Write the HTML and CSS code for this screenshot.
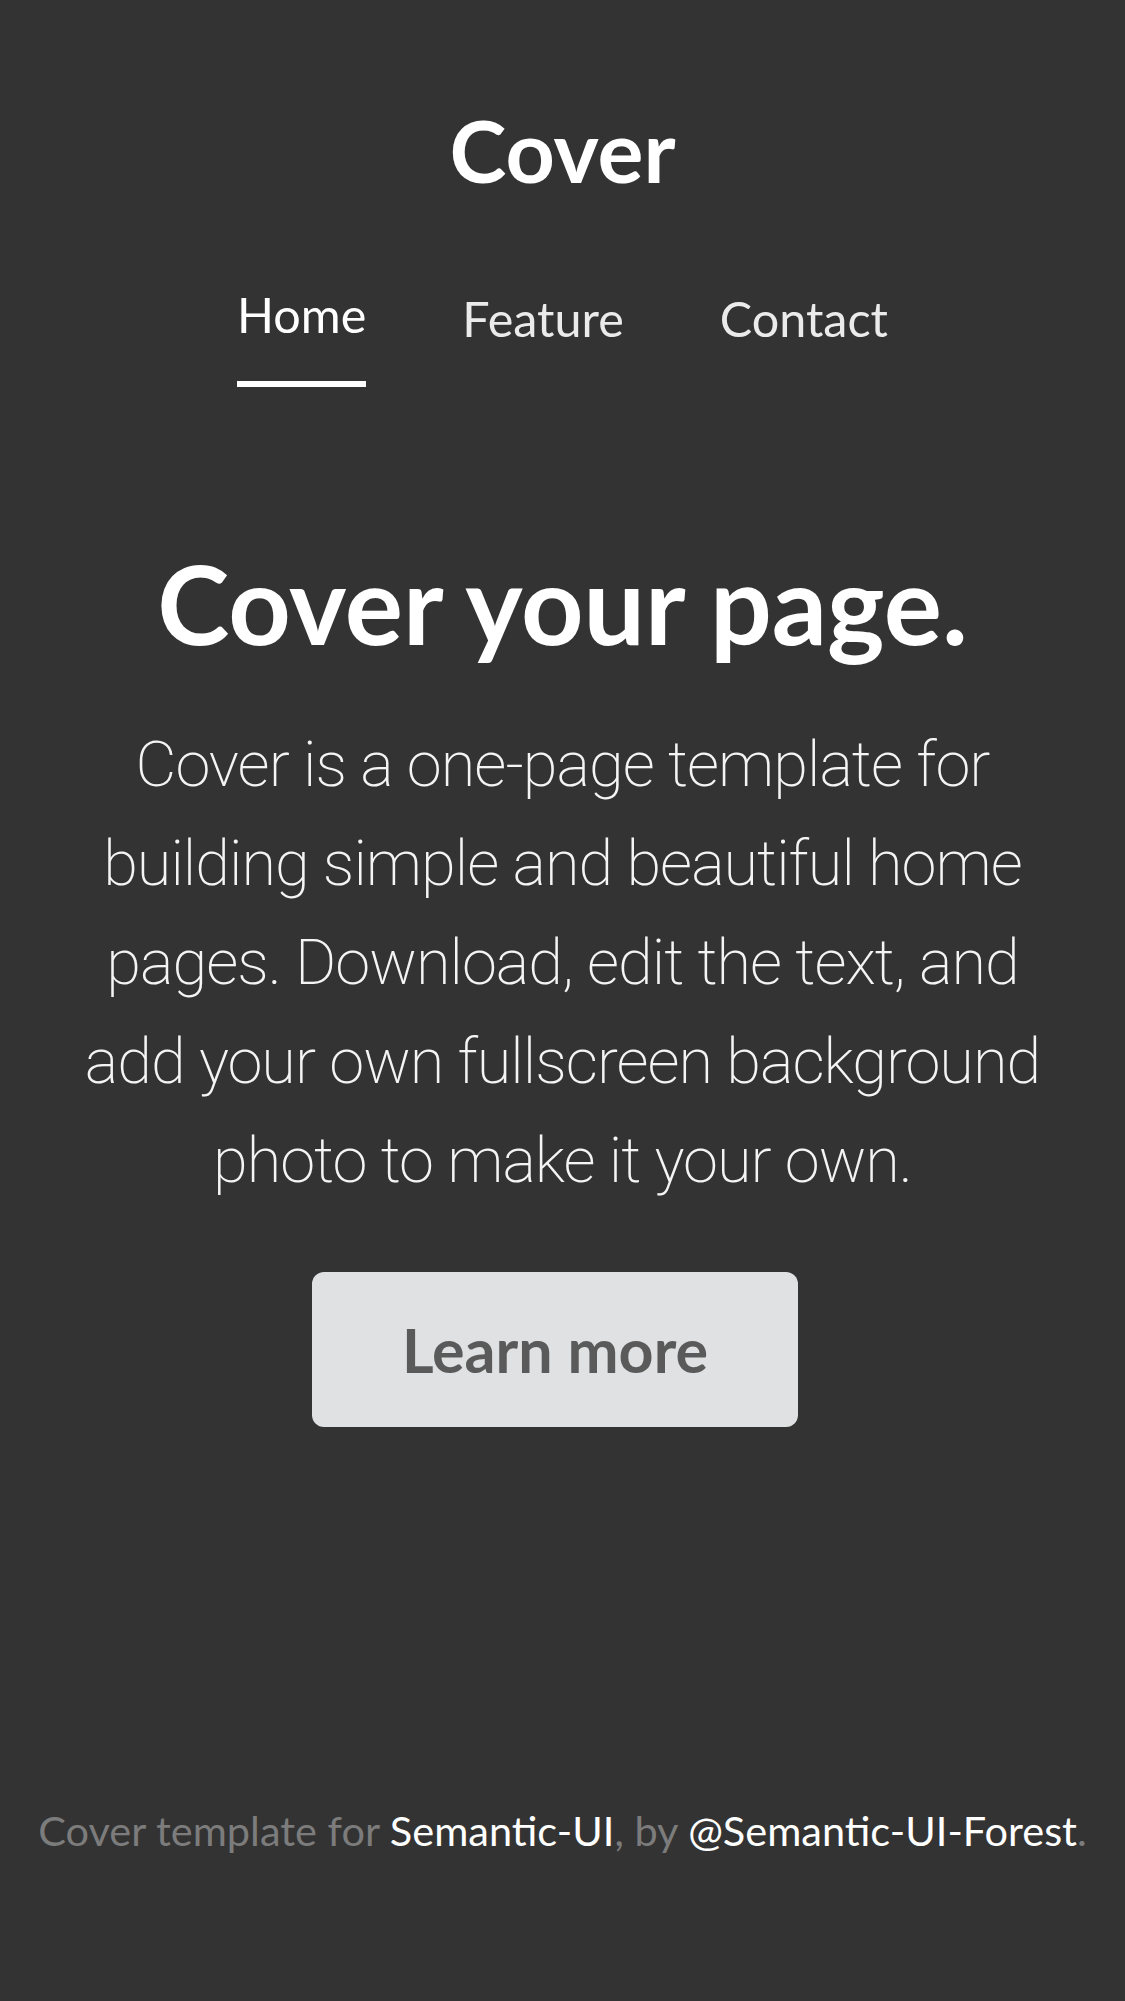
FILE: index.html
```html
<!DOCTYPE html>
<html lang="en">
<head>
<meta charset="utf-8">
<title>Cover</title>
<link rel="stylesheet" href="styles.css">
</head>
<body>
<div class="page">
  <header class="masthead">
    <h3 class="brand">Cover</h3>
    <nav class="nav">
      <a class="nav-item active" href="#">Home</a>
      <a class="nav-item" href="#">Feature</a>
      <a class="nav-item" href="#">Contact</a>
    </nav>
  </header>
  <main class="hero">
    <h1 class="hero-title">Cover your page.</h1>
    <p class="hero-lead">Cover is a one-page template for<br>building simple and beautiful home<br>pages. Download, edit the text, and<br>add your own fullscreen background<br>photo to make it your own.</p>
    <a class="btn" href="#">Learn more</a>
  </main>
  <footer class="footer">
    <p>Cover template for <a href="#">Semantic-UI</a>, by <a href="#">@Semantic-UI-Forest</a>.</p>
  </footer>
</div>
</body>
</html>
```
FILE: styles.css
```css
html, body {
  margin: 0;
  padding: 0;
  background: #333333;
}
body {
  font-family: "Lato", "Helvetica Neue", Arial, sans-serif;
  color: #ffffff;
}
.page {
  min-height: 100vh;
  display: flex;
  flex-direction: column;
  align-items: center;
  box-sizing: border-box;
}
.masthead {
  display: flex;
  flex-direction: column;
  align-items: center;
  padding-top: 107px;
}
.brand {
  margin: 0;
  font-size: 86px;
  line-height: 86px;
  font-weight: 700;
}
.nav {
  display: flex;
  align-items: flex-start;
  gap: 96px;
  margin-top: 101px;
}
.nav-item {
  color: #ebebeb;
  text-decoration: none;
  font-size: 48.5px;
  line-height: 48px;
  font-weight: 400;
  padding-bottom: 43px;
  border-bottom: 6px solid transparent;
}
.nav-item.active {
  color: #ffffff;
  margin-top: -4px;
  border-bottom-color: #ffffff;
}
.hero {
  display: flex;
  flex-direction: column;
  align-items: center;
  margin-top: 158px;
}
.hero-title {
  margin: 0;
  font-size: 109px;
  line-height: 108px;
  font-weight: 700;
}
.hero-lead {
  margin: 58px 0 0;
  font-family: "Roboto", "Helvetica Neue", Arial, sans-serif;
  font-weight: 200;
  font-size: 63px;
  line-height: 99px;
  letter-spacing: -1px;
  text-align: center;
  color: #f4f4f4;
  white-space: nowrap;
}
.btn {
  margin: 62px 15px 0 0;
  display: block;
  background: #e0e1e2;
  color: rgba(0, 0, 0, 0.6);
  text-decoration: none;
  font-size: 61px;
  line-height: 60px;
  font-weight: 700;
  padding: 48px 90px 47px;
  border-radius: 12px;
}
.footer {
  margin-top: auto;
  padding-bottom: 150px;
  text-align: center;
}
.footer p {
  margin: 0;
  font-size: 41.5px;
  line-height: 42px;
  color: #7c7c7c;
}
.footer a {
  color: #ffffff;
  text-decoration: none;
}
```
